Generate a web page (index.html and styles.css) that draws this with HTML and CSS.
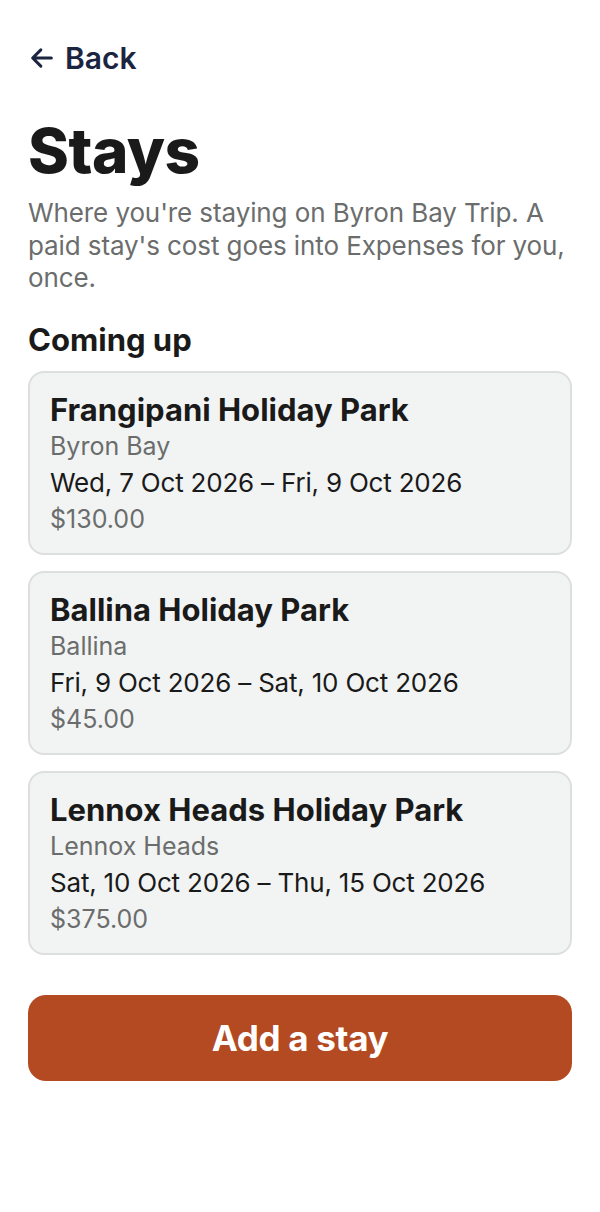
FILE: index.html
```html
<!DOCTYPE html>
<html lang="en">
<head>
<meta charset="utf-8">
<title>Stays</title>
<link rel="stylesheet" href="styles.css">
</head>
<body>
<main class="page">
  <a class="back" href="#">
    <svg class="back-icon" viewBox="0 0 24 24" aria-hidden="true">
      <path d="M20 12H5M11 5l-7 7 7 7" fill="none" stroke="currentColor" stroke-width="2.6" stroke-linecap="round" stroke-linejoin="round"/>
    </svg>
    <span>Back</span>
  </a>

  <h1 class="title">Stays</h1>
  <p class="intro">Where you're staying on Byron Bay Trip. A paid stay's cost goes into Expenses for you, once.</p>

  <h2 class="section-title">Coming up</h2>
  <ul class="stays">
    <li class="stay">
      <div class="stay-name">Frangipani Holiday Park</div>
      <div class="stay-place">Byron Bay</div>
      <div class="stay-dates">Wed, 7 Oct 2026 – Fri, 9 Oct 2026</div>
      <div class="stay-cost">$130.00</div>
    </li>
    <li class="stay">
      <div class="stay-name">Ballina Holiday Park</div>
      <div class="stay-place">Ballina</div>
      <div class="stay-dates">Fri, 9 Oct 2026 – Sat, 10 Oct 2026</div>
      <div class="stay-cost">$45.00</div>
    </li>
    <li class="stay">
      <div class="stay-name">Lennox Heads Holiday Park</div>
      <div class="stay-place">Lennox Heads</div>
      <div class="stay-dates">Sat, 10 Oct 2026 – Thu, 15 Oct 2026</div>
      <div class="stay-cost">$375.00</div>
    </li>
  </ul>

  <button class="add-btn" type="button">Add a stay</button>
</main>
</body>
</html>
```

FILE: styles.css
```css
* {
  box-sizing: border-box;
}

html, body {
  margin: 0;
  padding: 0;
  background: #ffffff;
}

body {
  font-family: Inter, "Noto Sans", "Liberation Sans", sans-serif;
  color: #1a1a1a;
}

.page {
  display: flex;
  flex-direction: column;
  padding: 41px 28px 40px;
}

.back {
  display: flex;
  align-items: center;
  gap: 9px;
  align-self: flex-start;
  height: 34px;
  font-size: 30px;
  font-weight: 600;
  color: #1b2540;
  text-decoration: none;
}

.back-icon {
  width: 28px;
  height: 28px;
}

.title {
  margin: 40px 0 0;
  font-size: 62px;
  line-height: 72px;
  font-weight: 800;
  letter-spacing: -0.5px;
  color: #1a1a1a;
}

.intro {
  margin: 10px 0 0;
  font-size: 26px;
  line-height: 32.5px;
  color: #6b6d6d;
  letter-spacing: -0.1px;
}

.section-title {
  margin: 28px 0 0;
  font-size: 31px;
  line-height: 34px;
  font-weight: 700;
  color: #1a1a1a;
}

.stays {
  list-style: none;
  margin: 14px 0 0;
  padding: 0;
  display: flex;
  flex-direction: column;
  gap: 16px;
}

.stay {
  background: #f2f4f3;
  border: 2px solid #dcdfdd;
  border-radius: 16px;
  padding: 19px 20px 17px;
  display: flex;
  flex-direction: column;
}

.stay-name {
  font-size: 31px;
  line-height: 36px;
  font-weight: 700;
  color: #1a1a1a;
}

.stay-place {
  font-size: 25px;
  line-height: 36px;
  color: #6b6d6d;
}

.stay-dates {
  font-size: 26px;
  line-height: 38px;
  color: #1a1a1a;
  letter-spacing: -0.2px;
}

.stay-cost {
  font-size: 25px;
  line-height: 34px;
  color: #6b6d6d;
}

.add-btn {
  margin-top: 40px;
  height: 86px;
  border: none;
  border-radius: 18px;
  background: #b34a22;
  color: #ffffff;
  font-family: inherit;
  font-size: 35px;
  font-weight: 700;
  letter-spacing: -0.3px;
  cursor: pointer;
}
```
